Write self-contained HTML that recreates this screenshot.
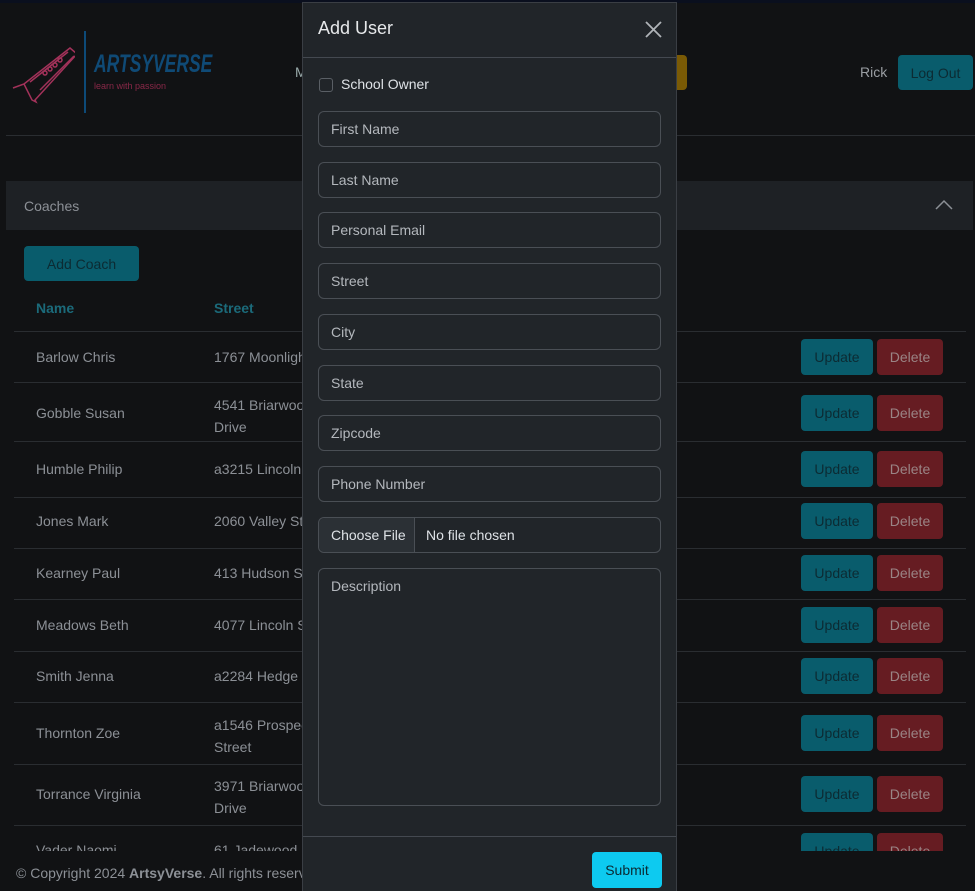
<!DOCTYPE html>
<html><head><meta charset="utf-8"><style>
*{box-sizing:border-box;margin:0;padding:0}
body{width:975px;height:891px;overflow:hidden;background:#111214;font-family:"Liberation Sans",sans-serif;font-size:14px;color:#8c9096;position:relative}
.top{position:absolute;left:0;top:0;width:975px;height:3px;background:#0a0f1e}
.abs{position:absolute}
.hline{position:absolute;left:6px;width:969px;height:1px;background:#2a2d31}
.card{position:absolute;left:6px;top:181px;width:967px;height:49px;background:#1e2125}
.btn{position:absolute;border-radius:4px;display:flex;align-items:center;justify-content:center;font-size:14px}
.upd{background:#095c6c;color:#0c2b33;width:72px;height:36px}
.del{background:#661c22;color:#9a8485;width:66px;height:36px}
.row{position:absolute;left:36px;font-size:14px;color:#8c9096}
.sep{position:absolute;left:14px;width:952px;height:1px;background:#2a2d31}
.modal{position:absolute;left:302px;top:2px;width:375px;height:889px;background:#212529;border:1px solid #3a3e44;border-bottom:none}
.inp{position:absolute;left:15px;width:343px;height:36px;border:1px solid #4a4f55;border-radius:6px;padding:0 12px;display:flex;align-items:center;color:#b4b8bd;font-size:14px;background:#212529}
</style></head><body>
<div class="top"></div>
<svg class="abs" style="left:10px;top:40px" width="65" height="65" viewBox="0 0 65 65"><g fill="none" stroke="#a3325a" stroke-width="1.5"><path d="M3 48 L14 44 L60 8 L67 14 L25 60 L26 62 L22 60 L14 44"/><path d="M20 42 L58 12 M30 50 L64 16"/><circle cx="50" cy="20" r="2"/><circle cx="45" cy="25" r="2"/><circle cx="40" cy="29" r="2"/><circle cx="35" cy="33" r="2"/></g></svg>
<div class="abs" style="left:84px;top:31px;width:2px;height:82px;background:#0d4a78"></div>
<div class="abs" style="left:94px;top:50px;font-size:25px;font-weight:bold;color:#0f4a76;font-style:italic;transform:scaleX(0.7);transform-origin:left top;white-space:nowrap">ARTSYVERSE</div>
<div class="abs" style="left:94px;top:81px;font-size:9px;color:#8a2848">learn with passion</div>
<div class="abs" style="left:295px;top:64px;color:#9aa;font-size:14px">M</div>
<div class="btn" style="left:640px;top:55px;width:47px;height:35px;background:#7a5a05"></div>
<div class="abs" style="left:860px;top:64px;color:#9a9ea3">Rick</div>
<div class="btn" style="left:898px;top:55px;width:75px;height:35px;background:#095c6c;color:#0c2b33">Log Out</div>
<div class="hline" style="top:135px"></div>
<div class="card"><div class="abs" style="left:18px;top:17px;color:#8c9096">Coaches</div>
<svg class="abs" style="left:929px;top:18px" width="18" height="12"><path d="M1 10 L9 2 L17 10" fill="none" stroke="#8c9096" stroke-width="1.5"/></svg></div>
<div class="btn" style="left:24px;top:246px;width:115px;height:35px;background:#095c6c;color:#0c2b33">Add Coach</div>
<div class="abs" style="left:36px;top:300px;color:#1b6a7a;font-weight:bold">Name</div>
<div class="abs" style="left:214px;top:300px;color:#1b6a7a;font-weight:bold">Street</div>
<div class="sep" style="top:331px"></div>
<div style="position:absolute;left:0;top:332px;width:975px;height:519px;overflow:hidden">
<div class="row" style="top:17px">Barlow Chris</div><div class="row" style="left:214px;top:17px">1767 Moonligh</div>
<div class="sep" style="top:50px"></div>
<div class="row" style="top:73px">Gobble Susan</div><div class="row" style="left:214px;top:62px;line-height:22px">4541 Briarwoo<br>Drive</div>
<div class="sep" style="top:109px"></div>
<div class="row" style="top:129px">Humble Philip</div><div class="row" style="left:214px;top:129px">a3215 Lincoln S</div>
<div class="sep" style="top:165px"></div>
<div class="row" style="top:181px">Jones Mark</div><div class="row" style="left:214px;top:181px">2060 Valley St</div>
<div class="sep" style="top:216px"></div>
<div class="row" style="top:233px">Kearney Paul</div><div class="row" style="left:214px;top:233px">413 Hudson St</div>
<div class="sep" style="top:267px"></div>
<div class="row" style="top:285px">Meadows Beth</div><div class="row" style="left:214px;top:285px">4077 Lincoln S</div>
<div class="sep" style="top:319px"></div>
<div class="row" style="top:336px">Smith Jenna</div><div class="row" style="left:214px;top:336px">a2284 Hedge S</div>
<div class="sep" style="top:370px"></div>
<div class="row" style="top:393px">Thornton Zoe</div><div class="row" style="left:214px;top:382px;line-height:22px">a1546 Prospec<br>Street</div>
<div class="sep" style="top:432px"></div>
<div class="row" style="top:454px">Torrance Virginia</div><div class="row" style="left:214px;top:443px;line-height:22px">3971 Briarwoo<br>Drive</div>
<div class="sep" style="top:493px"></div>
<div class="row" style="top:510px">Vader Naomi</div><div class="row" style="left:214px;top:510px">61 Jadewood</div>
<div class="btn upd" style="left:801px;top:7px">Update</div><div class="btn del" style="left:877px;top:7px">Delete</div>
<div class="btn upd" style="left:801px;top:63px">Update</div><div class="btn del" style="left:877px;top:63px">Delete</div>
<div class="btn upd" style="left:801px;top:119px">Update</div><div class="btn del" style="left:877px;top:119px">Delete</div>
<div class="btn upd" style="left:801px;top:171px">Update</div><div class="btn del" style="left:877px;top:171px">Delete</div>
<div class="btn upd" style="left:801px;top:223px">Update</div><div class="btn del" style="left:877px;top:223px">Delete</div>
<div class="btn upd" style="left:801px;top:275px">Update</div><div class="btn del" style="left:877px;top:275px">Delete</div>
<div class="btn upd" style="left:801px;top:326px">Update</div><div class="btn del" style="left:877px;top:326px">Delete</div>
<div class="btn upd" style="left:801px;top:383px">Update</div><div class="btn del" style="left:877px;top:383px">Delete</div>
<div class="btn upd" style="left:801px;top:444px">Update</div><div class="btn del" style="left:877px;top:444px">Delete</div>
<div class="btn upd" style="left:801px;top:501px">Update</div><div class="btn del" style="left:877px;top:501px">Delete</div>
</div>
<div class="abs" style="left:16px;top:865px;color:#8c9096">© Copyright 2024 <b>ArtsyVerse</b>. All rights reserved</div>

<div class="modal">
<div class="abs" style="left:15px;top:15px;font-size:18px;color:#e6e8ea">Add User</div>
<svg class="abs" style="left:342px;top:18px" width="17" height="17"><path d="M1 1 L16 16 M16 1 L1 16" stroke="#b0b4b8" stroke-width="1.8"/></svg>
<div class="abs" style="left:0;top:54px;width:373px;height:1px;background:#444950"></div>
<div class="abs" style="left:16px;top:75px;width:14px;height:14px;border:1px solid #5a5f65;border-radius:3px"></div>
<div class="abs" style="left:38px;top:73px;color:#dee2e6">School Owner</div>
<div class="inp" style="top:108px">First Name</div>
<div class="inp" style="top:159px">Last Name</div>
<div class="inp" style="top:209px">Personal Email</div>
<div class="inp" style="top:260px">Street</div>
<div class="inp" style="top:311px">City</div>
<div class="inp" style="top:362px">State</div>
<div class="inp" style="top:412px">Zipcode</div>
<div class="inp" style="top:463px">Phone Number</div>
<div class="inp" style="top:514px;padding:0;color:#dee2e6"><div style="height:100%;width:96px;background:#2b3035;border-right:1px solid #4a4f55;display:flex;align-items:center;padding-left:12px;border-radius:6px 0 0 6px">Choose File</div><span style="margin-left:11px">No file chosen</span></div>
<div class="inp" style="top:565px;height:238px;align-items:flex-start;padding-top:9px">Description</div>
<div class="abs" style="left:0;top:833px;width:373px;height:1px;background:#444950"></div>
<div class="btn" style="left:289px;top:849px;width:70px;height:36px;background:#0dcaf0;color:#0b2a33">Submit</div>
</div>
</body></html>
